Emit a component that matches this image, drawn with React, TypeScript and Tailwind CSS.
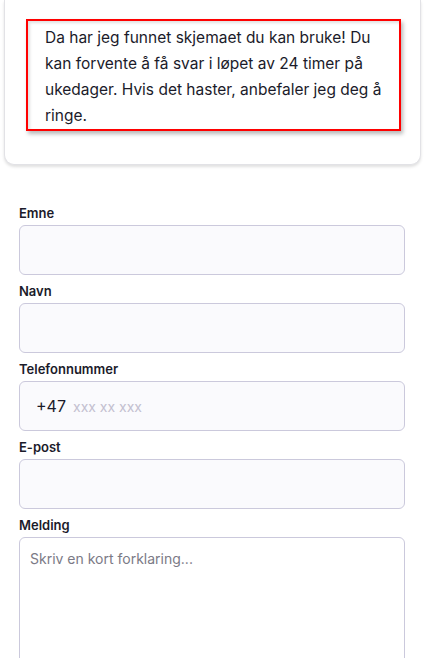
import React from "react";

function Field({ label, children }: { label: string; children: React.ReactNode }) {
  return (
    <div className="flex flex-col">
      <label className="mb-[2px] text-[13px] font-semibold leading-[20px] text-[#1b1b2a]">{label}</label>
      {children}
    </div>
  );
}

const inputCls =
  "h-[50px] w-full rounded-[6px] border border-[#cbc9dc] bg-[#fafafd] px-[16px] text-[15px] outline-none";

export default function App() {
  return (
    <div className="min-h-[658px] bg-white pb-10 font-['Inter',sans-serif] text-[#1b1b2a]">
      {/* chat bubble card, top cut off */}
      <div className="ml-[4px] w-[417px] rounded-b-[10px] border-x border-b border-[#e2e2e6] bg-white pl-[21px] pb-[33px] pt-[19px] shadow-[0_2px_3px_rgba(0,0,0,0.12)]">
        <div className="w-[375px] border-2 border-[#ff0000] pl-[17px] pr-[10px] pt-[4px] text-[15.5px] leading-[26px] shadow-[2px_3px_4px_rgba(0,0,0,0.28),inset_2px_2px_3px_rgba(0,0,0,0.12)]">
          Da har jeg funnet skjemaet du kan bruke! Du kan forvente å få svar i løpet av 24 timer på ukedager. Hvis det
          haster, anbefaler jeg deg å ringe.
        </div>
      </div>

      <form className="ml-[19px] mt-[38px] flex w-[386px] flex-col gap-[6px]">
        <Field label="Emne">
          <input className={inputCls} />
        </Field>
        <Field label="Navn">
          <input className={inputCls} />
        </Field>
        <Field label="Telefonnummer">
          <div className="flex h-[50px] w-full items-center rounded-[6px] border border-[#cbc9dc] bg-[#fafafd] pl-[16px]">
            <span className="text-[16px] text-[#1b1b2a]">+47</span>
            <input
              className="ml-[7px] flex-1 bg-transparent text-[14px] outline-none placeholder:text-[#c3c0d0]"
              placeholder="xxx xx xxx"
            />
          </div>
        </Field>
        <Field label="E-post">
          <input className={inputCls} />
        </Field>
        <Field label="Melding">
          <textarea
            className="h-[160px] w-full resize-none rounded-[6px] border border-[#cbc9dc] bg-white px-[10px] py-[10px] text-[14px] outline-none placeholder:text-[#7b7a86]"
            placeholder="Skriv en kort forklaring..."
          />
        </Field>
      </form>
    </div>
  );
}
